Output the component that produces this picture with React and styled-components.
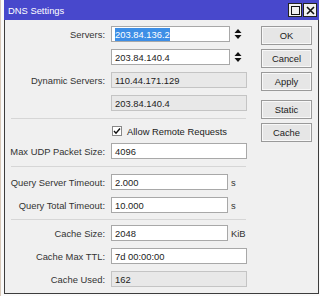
import React from "react";
import styled, { createGlobalStyle } from "styled-components";

const GlobalStyle = createGlobalStyle`
  html, body {
    margin: 0;
    padding: 0;
    background: #fafafa;
    font-family: "Liberation Sans", Arial, sans-serif;
  }
`;

const Desktop = styled.div`
  width: 320px;
  height: 296px;
  padding-left: 3px;
  box-sizing: border-box;
  border-left: 1px solid #d8c8b8;
`;

const Window = styled.div`
  width: 315px;
  height: 294px;
  box-sizing: border-box;
  background: #f0f0f0;
  border: 1px solid #3c3c3c;
  border-top: none;
  display: flex;
  flex-direction: column;
  font-size: 9.4px;
  color: #222;
`;

const TitleBar = styled.div`
  height: 20px;
  margin: 0 -1px;
  background: #4848cc;
  display: flex;
  align-items: center;
  padding: 0 2px 0 4px;
  color: #fff;
  font-size: 9.4px;
`;

const Title = styled.div`
  flex: 1;
`;

const TitleButton = styled.div`
  width: 12px;
  height: 12px;
  margin-left: 1px;
  background: #f0f0f0;
  border: 1px solid #222;
  display: flex;
  align-items: center;
  justify-content: center;
`;

const Body = styled.div`
  display: flex;
  padding-top: 6px;
`;

const Form = styled.div`
  width: 242px;
  display: flex;
  flex-direction: column;
  gap: 7px;
`;

const Row = styled.div`
  display: flex;
  align-items: center;
  height: 16px;
`;

const Label = styled.div`
  width: 100px;
  margin-right: 6px;
  text-align: right;
  white-space: nowrap;
  color: #333;
`;

const Field = styled.div`
  width: ${(p) => p.$w}px;
  height: 16px;
  box-sizing: border-box;
  padding-left: 3px;
  display: flex;
  align-items: center;
  background: ${(p) => (p.$ro ? "#e8e8e8" : "#ffffff")};
  border: 1px solid ${(p) => (p.$ro ? "#c4c4c4" : "#a8a8a8")};
  color: #222;
  white-space: nowrap;
`;

const Selected = styled.span`
  background: #3d8ee6;
  color: #fff;
  padding: 1px 0;
`;

const Unit = styled.div`
  margin-left: 3px;
  color: #333;
`;

const Spinner = styled.svg`
  margin-left: 4px;
`;

const Sep = styled.div`
  margin: ${(p) => (p.$tight ? "-1px 0 -2px 6px" : "0 0 0 6px")};
  width: 235px;
  height: 1px;
  background: #d6d6d6;
`;

const CheckRow = styled.div`
  display: flex;
  align-items: center;
  height: 10px;
  padding-left: 107px;
`;

const CheckBox = styled.div`
  width: 10px;
  height: 10px;
  box-sizing: border-box;
  background: #fff;
  border: 1px solid #888;
  display: flex;
  align-items: center;
  justify-content: center;
  margin-right: 5px;
`;

const Buttons = styled.div`
  margin-left: 14px;
  display: flex;
  flex-direction: column;
  gap: 4px;
`;

const Button = styled.div`
  width: 51px;
  height: 19px;
  box-sizing: border-box;
  margin-top: ${(p) => (p.$space ? "5px" : "0")};
  background: #e6e6e6;
  border: 1px solid #9a9a9a;
  box-shadow: inset 0 0 0 1px #f8f8f8;
  display: flex;
  align-items: center;
  justify-content: center;
  color: #222;
`;

const Arrows = () => (
  <Spinner width="8" height="12" viewBox="0 0 8 12">
    <path d="M4 1 L7.5 5 L0.5 5 Z" fill="#111" />
    <path d="M0.5 7 L7.5 7 L4 11 Z" fill="#111" />
  </Spinner>
);

export default function App() {
  return (
    <Desktop>
      <GlobalStyle />
      <Window>
        <TitleBar>
          <Title>DNS Settings</Title>
          <TitleButton>
            <svg width="9" height="9" viewBox="0 0 9 9">
              <rect x="0.5" y="0.5" width="8" height="8" fill="none" stroke="#111" />
            </svg>
          </TitleButton>
          <TitleButton>
            <svg width="9" height="9" viewBox="0 0 9 9">
              <path d="M1 1 L8 8 M8 1 L1 8" stroke="#111" strokeWidth="1.6" />
            </svg>
          </TitleButton>
        </TitleBar>
        <Body>
          <Form>
            <Row>
              <Label>Servers:</Label>
              <Field $w={119}>
                <Selected>203.84.136.2</Selected>
              </Field>
              <Arrows />
            </Row>
            <Row>
              <Label />
              <Field $w={119}>203.84.140.4</Field>
              <Arrows />
            </Row>
            <Row>
              <Label>Dynamic Servers:</Label>
              <Field $w={136} $ro>110.44.171.129</Field>
            </Row>
            <Row>
              <Label />
              <Field $w={136} $ro>203.84.140.4</Field>
            </Row>
            <Sep />
            <CheckRow>
              <CheckBox>
                <svg width="8" height="8" viewBox="0 0 8 8">
                  <path d="M1 4 L3 6.2 L7 1.5" fill="none" stroke="#111" strokeWidth="1.4" />
                </svg>
              </CheckBox>
              Allow Remote Requests
            </CheckRow>
            <Row>
              <Label>Max UDP Packet Size:</Label>
              <Field $w={136}>4096</Field>
            </Row>
            <Sep />
            <Row>
              <Label>Query Server Timeout:</Label>
              <Field $w={117}>2.000</Field>
              <Unit>s</Unit>
            </Row>
            <Row>
              <Label>Query Total Timeout:</Label>
              <Field $w={117}>10.000</Field>
              <Unit>s</Unit>
            </Row>
            <Sep $tight />
            <Row>
              <Label>Cache Size:</Label>
              <Field $w={117}>2048</Field>
              <Unit>KiB</Unit>
            </Row>
            <Row>
              <Label>Cache Max TTL:</Label>
              <Field $w={136}>7d 00:00:00</Field>
            </Row>
            <Row>
              <Label>Cache Used:</Label>
              <Field $w={136} $ro>162</Field>
            </Row>
          </Form>
          <Buttons>
            <Button>OK</Button>
            <Button>Cancel</Button>
            <Button>Apply</Button>
            <Button $space>Static</Button>
            <Button>Cache</Button>
          </Buttons>
        </Body>
      </Window>
    </Desktop>
  );
}
